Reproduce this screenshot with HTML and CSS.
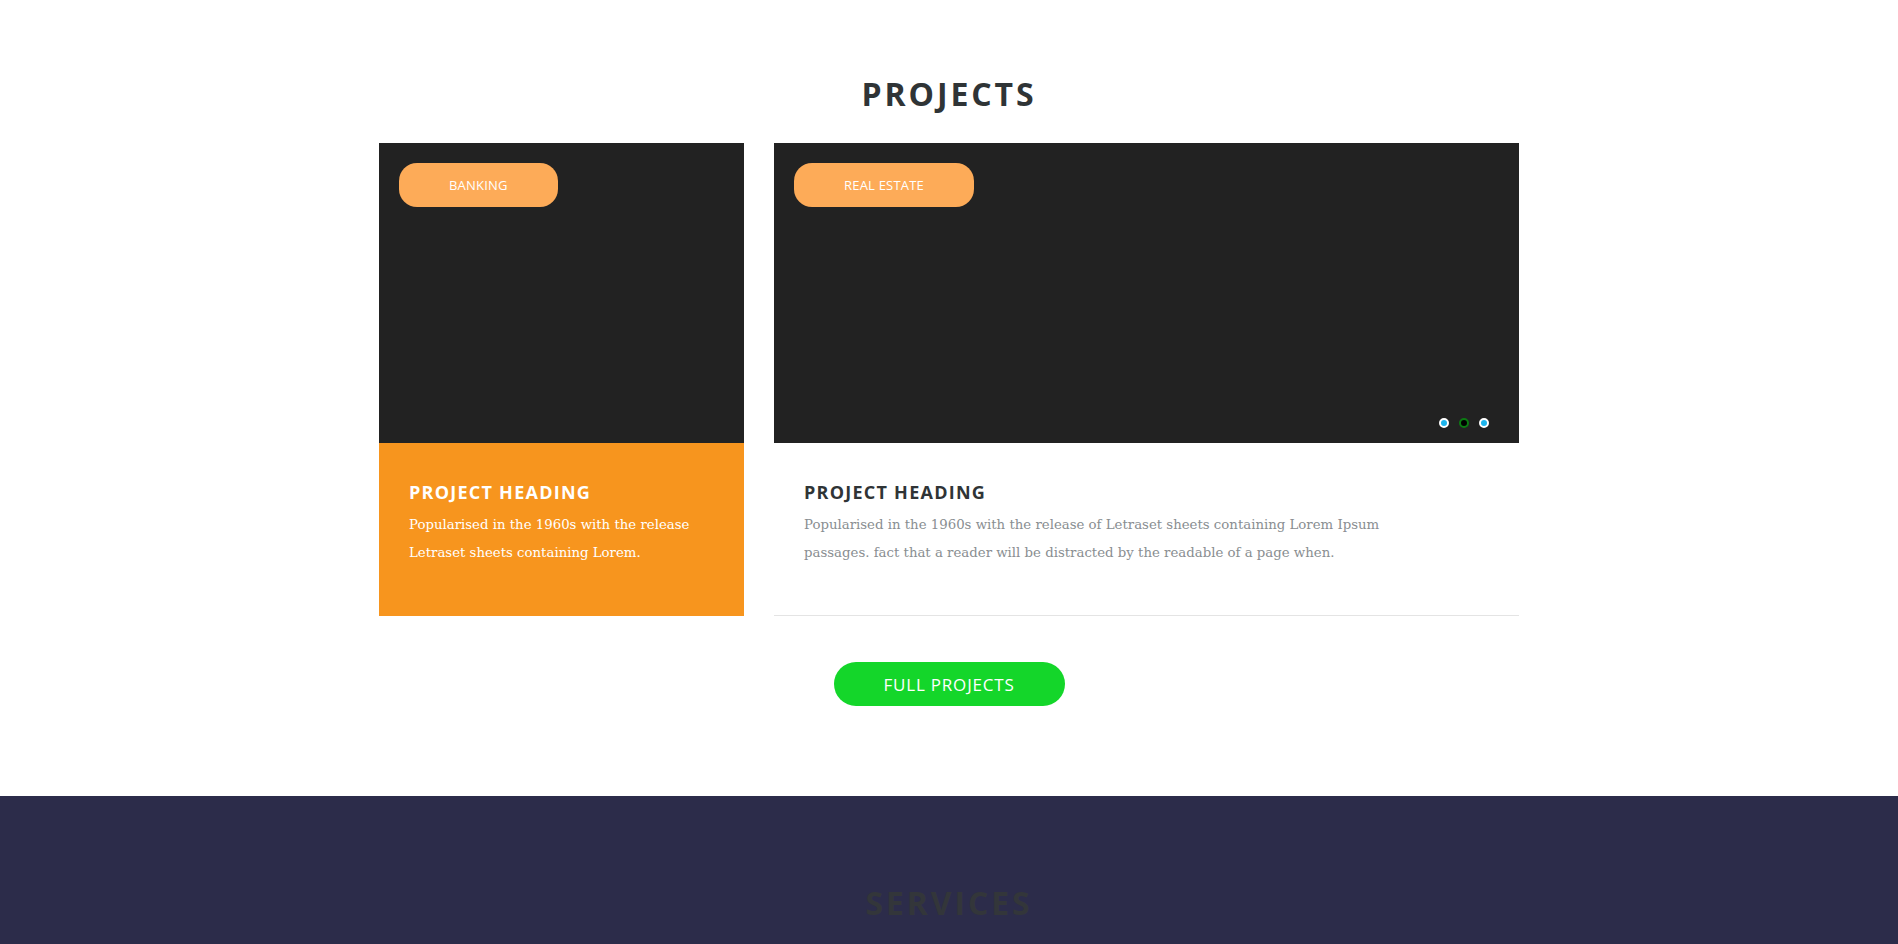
FILE: index.html
```html
<!DOCTYPE html>
<html lang="en">
<head>
<meta charset="utf-8">
<title>Projects</title>
<link rel="stylesheet" href="styles.css">
</head>
<body>
<section class="projects">
  <h2 class="section-title">PROJECTS</h2>
  <div class="project-row">
    <article class="project project-small">
      <div class="project-media">
        <span class="tag">BANKING</span>
      </div>
      <div class="project-body body-orange">
        <h3 class="project-heading">PROJECT HEADING</h3>
        <p class="project-text">Popularised in the 1960s with the release Letraset sheets containing Lorem.</p>
      </div>
    </article>
    <article class="project project-large">
      <div class="project-media">
        <span class="tag">REAL ESTATE</span>
        <div class="dots">
          <span class="dot"></span>
          <span class="dot dot-active"></span>
          <span class="dot"></span>
        </div>
      </div>
      <div class="project-body body-plain">
        <h3 class="project-heading">PROJECT HEADING</h3>
        <p class="project-text">Popularised in the 1960s with the release of Letraset sheets containing Lorem Ipsum passages. fact that a reader will be distracted by the readable of a page when.</p>
      </div>
    </article>
  </div>
  <div class="actions">
    <a class="btn-full" href="#">FULL PROJECTS</a>
  </div>
</section>
<section class="services">
  <h2 class="section-title title-dim">SERVICES</h2>
</section>
</body>
</html>
```

FILE: styles.css
```css
* { box-sizing: border-box; }
html, body { margin: 0; padding: 0; }
body {
  background: #ffffff;
  font-family: "Open Sans", "Liberation Sans", sans-serif;
  color: #333;
  overflow: hidden;
}
.projects {
  padding: 75px 0 90px;
}
.section-title {
  margin: 0;
  text-align: center;
  font-family: "Open Sans", sans-serif;
  font-weight: 700;
  font-size: 32px;
  line-height: 38px;
  letter-spacing: 2.9px;
  color: #2f3436;
}
.projects .section-title { margin-bottom: 30px; }
.project-row {
  width: 1140px;
  margin: 0 auto;
  display: flex;
  gap: 30px;
}
.project-small { width: 365px; flex: none; }
.project-large { flex: 1; }
.project-media {
  position: relative;
  height: 300px;
  background: #222222;
  padding: 20px;
  display: flex;
  align-items: flex-start;
}
.tag {
  display: inline-flex;
  align-items: center;
  height: 44px;
  padding: 0 50px;
  border-radius: 18px;
  background: #fdab58;
  color: #fff;
  font-size: 13px;
  letter-spacing: 0.2px;
}
.dots {
  position: absolute;
  right: 30px;
  bottom: 15px;
  display: flex;
  gap: 10px;
}
.dot {
  width: 10px;
  height: 10px;
  border-radius: 50%;
  background: #1cb4ec;
  border: 2px solid #fff;
}
.dot-active {
  background: #000;
  border-color: #0b7a12;
}
.project-body {
  height: 173px;
  padding: 38px 30px 0;
}
.body-orange { background: #f7951e; color: #fff; }
.body-plain { border-bottom: 1px solid #e4e4e4; }
.project-heading {
  margin: 0 0 8px;
  font-family: "Open Sans", sans-serif;
  font-weight: 700;
  font-size: 18px;
  line-height: 22px;
  letter-spacing: 1.25px;
}
.body-plain .project-heading { color: #2f3436; }
.project-text {
  margin: 0;
  font-family: "DejaVu Serif", serif;
  font-size: 13.3px;
  line-height: 28px;
}
.body-plain .project-text { color: #898e91; max-width: 625px; }
.actions {
  display: flex;
  justify-content: center;
  margin-top: 46px;
}
.btn-full {
  display: flex;
  align-items: center;
  justify-content: center;
  width: 231px;
  height: 44px;
  border-radius: 22px;
  background: #14d62a;
  color: #fff;
  text-decoration: none;
  font-size: 17px;
  letter-spacing: 0.8px;
}
.services {
  background: #2c2c4a;
  min-height: 400px;
  padding-top: 88px;
}
.title-dim { color: #33363a; }
```
